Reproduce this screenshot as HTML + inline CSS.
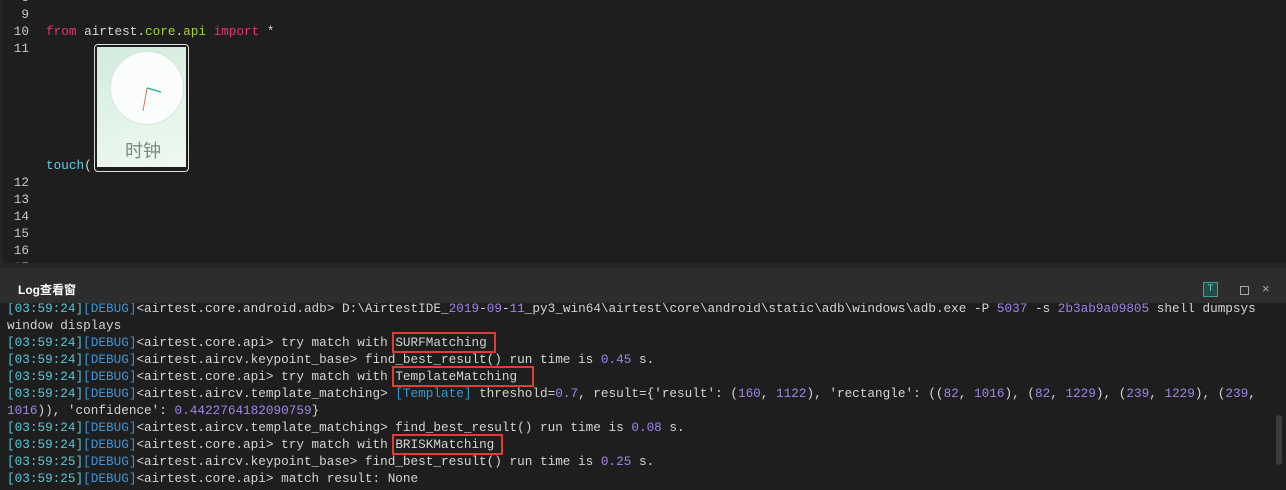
<!DOCTYPE html>
<html><head><meta charset="utf-8"><style>
body{margin:0;width:1286px;height:490px;background:#252526;overflow:hidden;font-family:"Liberation Mono","Noto Sans CJK SC",monospace;font-size:12.7px;color:#d4d4d4}
#ed{position:absolute;left:3px;top:0;width:1283px;height:263px;background:#1e1e1e;overflow:hidden}
.r{position:absolute;left:0;height:17px;line-height:17px;white-space:pre}
.n{position:absolute;left:0;width:26px;text-align:right;color:#c8c8c8;height:17px;line-height:17px}
.k{color:#e8336d}.g{color:#a6d22e}.t{color:#5ccfe6}
#hd{position:absolute;left:0;top:268px;width:1286px;height:36px;background:#2d2d2d}
#hd b{position:absolute;left:18px;top:13px;font-family:"Liberation Sans","Noto Sans CJK SC",sans-serif;font-size:12px;color:#fff}
#log{position:absolute;left:0;top:303px;width:1286px;height:187px;background:#1e1e1e;overflow:hidden}
#lc{position:absolute;left:7px;top:-3px;width:1270px}
.l{height:17px;line-height:17px;white-space:pre}
.ts{color:#56c8d8}.d{color:#3d95d6}.p{color:#a184e8}
.bx{outline:2px solid #e53935;outline-offset:1px;padding-right:6px}
</style></head><body>
<div id="ed">
<div class="n" style="top:-11px;left:0">8</div>
<div class="n" style="top:6px">9</div>
<div class="n" style="top:23px">10</div>
<div class="r" style="top:23px;left:43px"><span class="k">from</span> airtest.<span class="g">core</span>.<span class="g">api</span> <span class="k">import</span> *</div>
<div class="n" style="top:40px">11</div>
<div class="r" style="top:157px;left:43px"><span class="t">touch</span>(          )</div>
<div style="position:absolute;left:91px;top:44px;width:93px;height:126px;border:1px solid #ddd;border-radius:4px;background:#1e1e1e"></div>
<div style="position:absolute;left:94px;top:47px;width:89px;height:120px;background:linear-gradient(160deg,#d3eadd,#e4f5ea 60%,#eef8f1)"></div>
<div style="position:absolute;left:107px;top:51px;width:72px;height:72px;border-radius:50%;background:#fbfdfc;border:1px solid #d4e5da"></div>
<svg style="position:absolute;left:107px;top:51px" width="74" height="74"><line x1="37" y1="37" x2="51" y2="41" stroke="#3fb39a" stroke-width="1.6"/><line x1="37" y1="37" x2="33" y2="60" stroke="#e07a4a" stroke-width="1"/></svg>
<div style="position:absolute;left:122px;top:137px;font-family:'Noto Sans CJK SC',sans-serif;font-size:18px;color:#7a8a80">时钟</div>
<div class="n" style="top:174px">12</div>
<div class="n" style="top:191px">13</div>
<div class="n" style="top:208px">14</div>
<div class="n" style="top:225px">15</div>
<div class="n" style="top:242px">16</div>
<div class="n" style="top:259px">17</div>
</div>
<div id="hd"><b>Log查看窗</b>
<div style="position:absolute;left:1203px;top:14px;width:13px;height:13px;border:1px solid #3aa29a;background:#264c4a;color:#5fd4c8;font-size:10px;line-height:13px;text-align:center">T</div>
<div style="position:absolute;left:1240px;top:18px;width:7px;height:7px;border:1px solid #aaa"></div>
<div style="position:absolute;left:1262px;top:13px;color:#aaa;font-family:'Liberation Sans';font-size:13px">×</div>
</div>
<div id="log"><div id="lc">
<div class="l"><span class="ts">[03:59:24]</span><span class="d">[DEBUG]</span>&lt;airtest.core.android.adb&gt; D:\AirtestIDE_<span class="p">2019</span>-<span class="p">09</span>-<span class="p">11</span>_py3_win64\airtest\core\android\static\adb\windows\adb.exe -P <span class="p">5037</span> -s <span class="p">2b3ab9a09805</span> shell dumpsys</div>
<div class="l">window displays</div>
<div class="l"><span class="ts">[03:59:24]</span><span class="d">[DEBUG]</span>&lt;airtest.core.api&gt; try match with <span class="bx">SURFMatching</span></div>
<div class="l"><span class="ts">[03:59:24]</span><span class="d">[DEBUG]</span>&lt;airtest.aircv.keypoint_base&gt; find_best_result() run time is <span class="p">0.45</span> s.</div>
<div class="l"><span class="ts">[03:59:24]</span><span class="d">[DEBUG]</span>&lt;airtest.core.api&gt; try match with <span class="bx">TemplateMatching </span></div>
<div class="l"><span class="ts">[03:59:24]</span><span class="d">[DEBUG]</span>&lt;airtest.aircv.template_matching&gt; <span class="d">[Template]</span> threshold=<span class="p">0.7</span>, result={'result': (<span class="p">160</span>, <span class="p">1122</span>), 'rectangle': ((<span class="p">82</span>, <span class="p">1016</span>), (<span class="p">82</span>, <span class="p">1229</span>), (<span class="p">239</span>, <span class="p">1229</span>), (<span class="p">239</span>,</div>
<div class="l"><span class="p">1016</span>)), 'confidence': <span class="p">0.4422764182090759</span>}</div>
<div class="l"><span class="ts">[03:59:24]</span><span class="d">[DEBUG]</span>&lt;airtest.aircv.template_matching&gt; find_best_result() run time is <span class="p">0.08</span> s.</div>
<div class="l"><span class="ts">[03:59:24]</span><span class="d">[DEBUG]</span>&lt;airtest.core.api&gt; try match with <span class="bx">BRISKMatching</span></div>
<div class="l"><span class="ts">[03:59:25]</span><span class="d">[DEBUG]</span>&lt;airtest.aircv.keypoint_base&gt; find_best_result() run time is <span class="p">0.25</span> s.</div>
<div class="l"><span class="ts">[03:59:25]</span><span class="d">[DEBUG]</span>&lt;airtest.core.api&gt; match result: None</div>
</div>
<div style="position:absolute;left:1276px;top:112px;width:6px;height:50px;background:#3c3c3c;border-radius:3px"></div>
</div>
</body></html>
